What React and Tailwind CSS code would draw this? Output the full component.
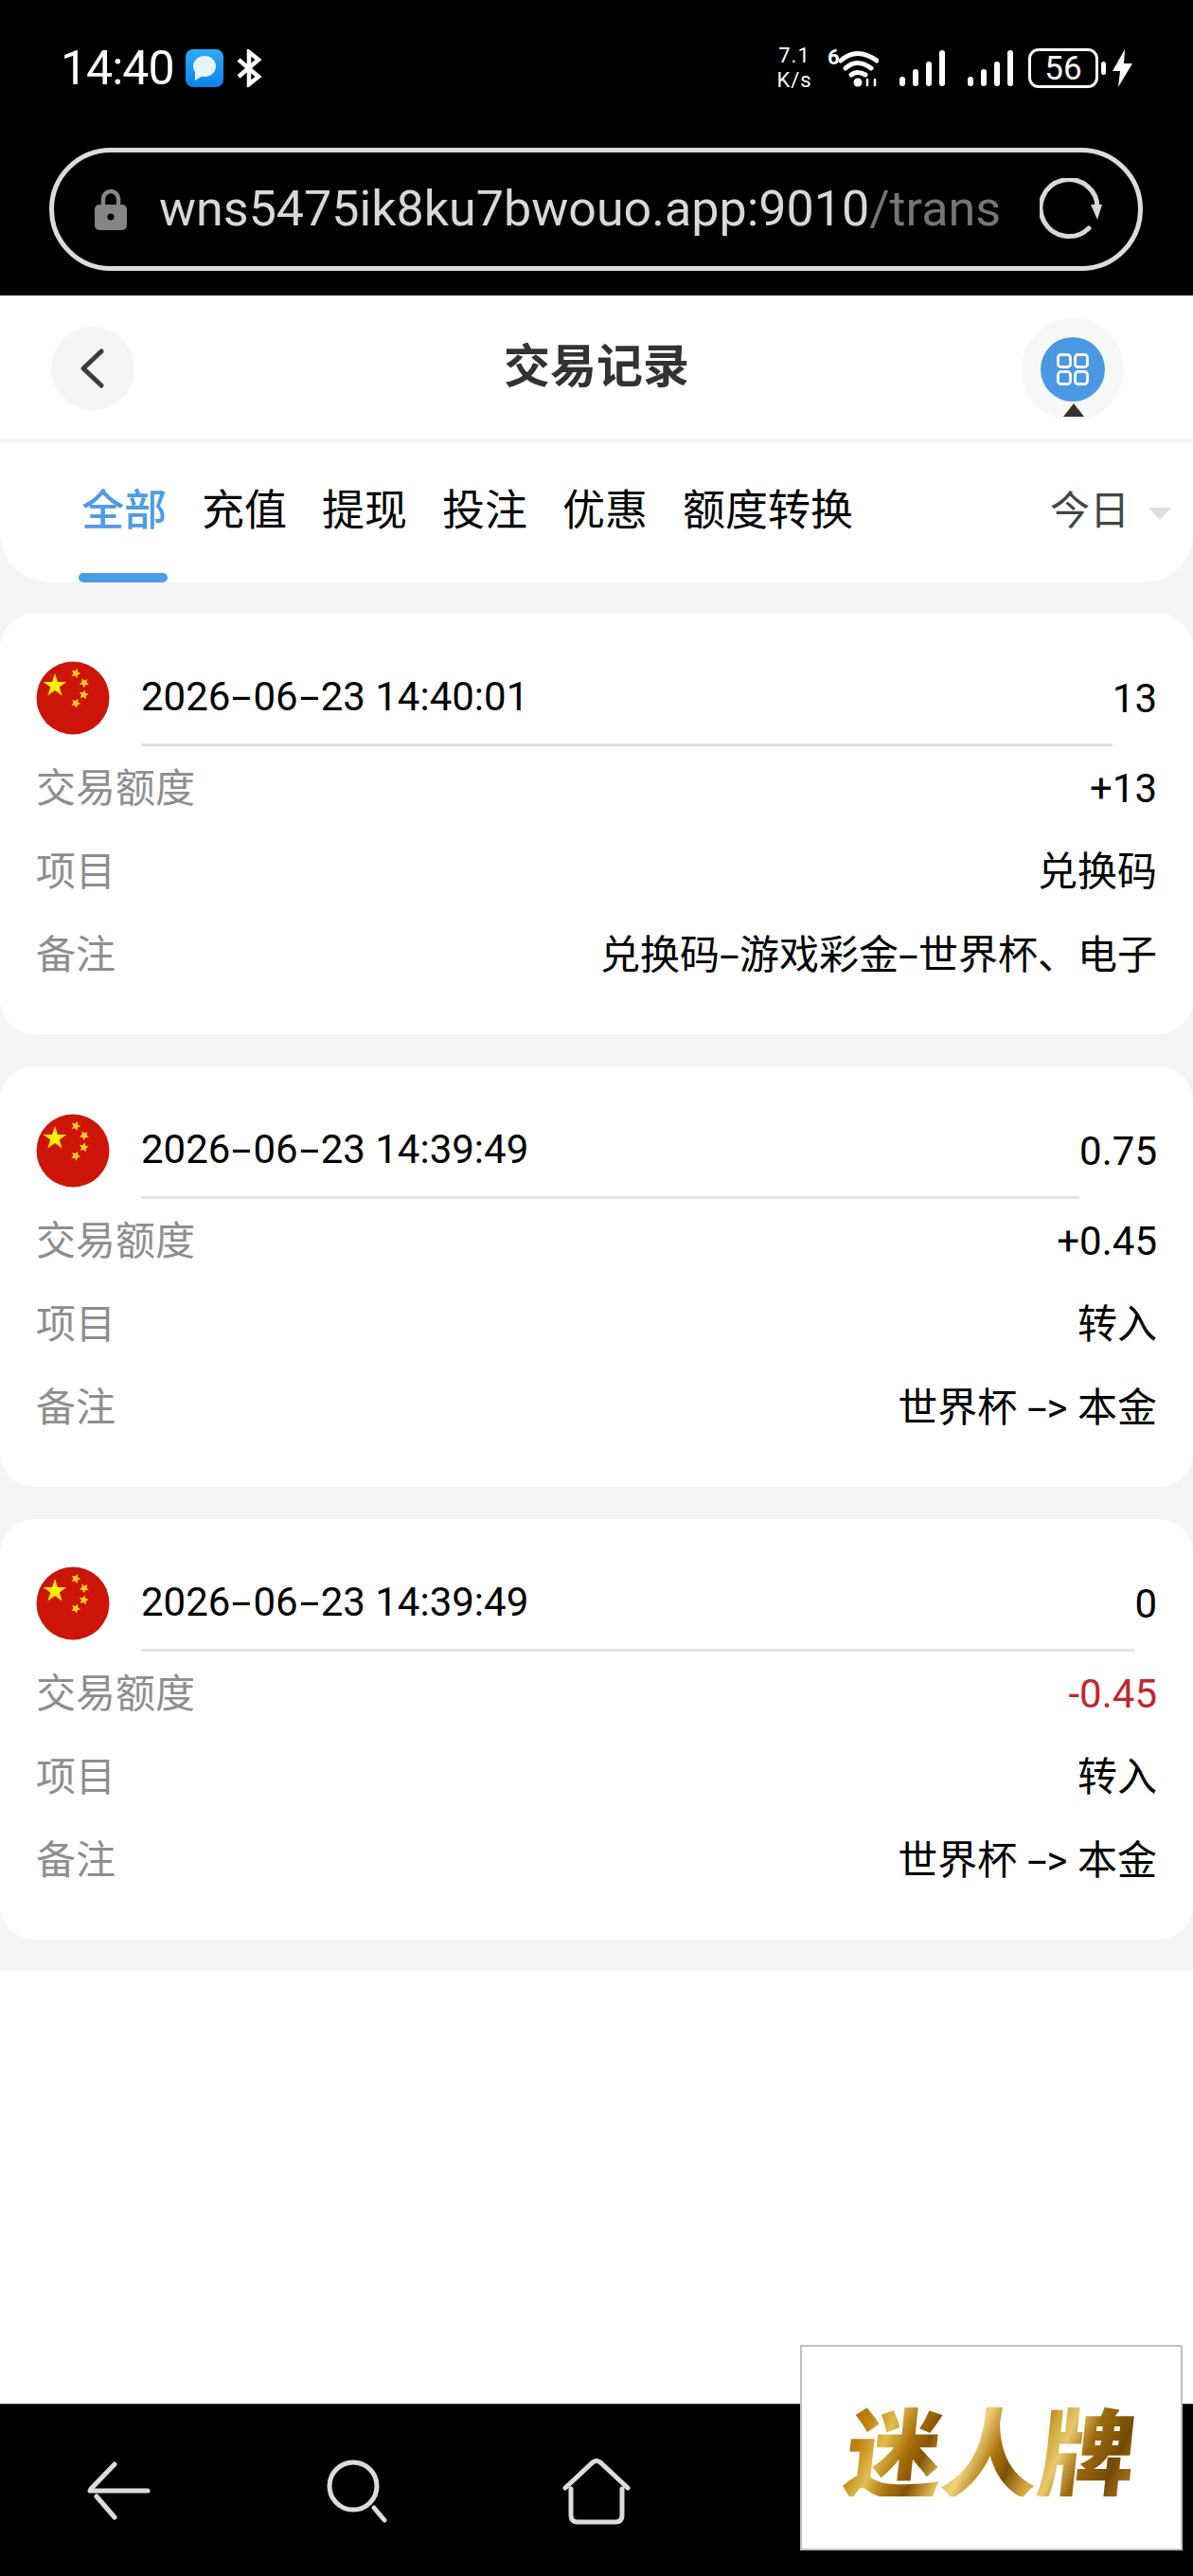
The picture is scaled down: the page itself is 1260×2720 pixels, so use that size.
const records = [
  { time: '2026-06-23 14:40:01', balance: '13', amount: '+13', item: '兑换码', note: '兑换码-游戏彩金-世界杯、电子' },
  { time: '2026-06-23 14:39:49', balance: '0.75', amount: '+0.45', item: '转入', note: '世界杯 -> 本金' },
  { time: '2026-06-23 14:39:49', balance: '0', amount: '-0.45', item: '转入', note: '世界杯 -> 本金', negative: true },
]

const tabs = ['全部', '充值', '提现', '投注', '优惠', '额度转换']

// the phone font has a much wider hyphen than Roboto
function Dashed({ text, dash = 'w-[21px]' }) {
  return text.split('-').map((part, i) => (
    <span key={i}>
      {i > 0 && <span className={`inline-block scale-x-[1.8] text-center ${dash}`}>-</span>}
      {part}
    </span>
  ))
}

function Star({ cx, cy, r, rot = 0, fill }) {
  const pts = []
  const inner = r < 8 ? 0.48 : 0.382
  for (let i = 0; i < 10; i++) {
    const rr = i % 2 === 0 ? r : r * inner
    const a = ((-90 + rot + i * 36) * Math.PI) / 180
    pts.push(`${cx + rr * Math.cos(a)},${cy + rr * Math.sin(a)}`)
  }
  return <polygon points={pts.join(' ')} fill={fill} />
}

function Flag() {
  return (
    <svg width="78" height="78" viewBox="0 0 78 78" className="shrink-0">
      <circle cx="39" cy="39" r="38.5" fill="#cc1508" />
      <Star cx={20} cy={26} r={13} fill="#fff000" />
      <Star cx={42} cy={13} r={5.2} rot={20} fill="#ffd21e" />
      <Star cx={51} cy={23} r={5.2} rot={40} fill="#ffd21e" />
      <Star cx={50.5} cy={35.5} r={5.2} rot={10} fill="#ffd21e" />
      <Star cx={42} cy={44.5} r={5.2} rot={25} fill="#ffd21e" />
    </svg>
  )
}

function Row({ label, children, className = 'text-black' }) {
  return (
    <div className="flex h-[88px] items-center justify-between">
      <span className="text-[42px] text-[#8e8e8e]">{label}</span>
      <span className={`text-[42px] ${className}`}>{children}</span>
    </div>
  )
}

function RecordCard({ record }) {
  return (
    <div className="h-[444px] rounded-[36px] bg-white px-[38px] pt-[38px]">
      <div className="flex h-[102px] items-center">
        <Flag />
        <div className="ml-[33px] flex h-[102px] flex-1 items-center border-b-[3px] border-[#e2e2e2] text-[42px] text-black">
          <Dashed text={record.time} dash="w-[24px]" />
        </div>
        <span className="text-[42px] text-black">{record.balance}</span>
      </div>
      <Row label="交易额度" className={record.negative ? 'text-[#c4252b]' : 'text-black'}>
        {record.negative ? <span className="pl-[3px]">{record.amount}</span> : record.amount}
      </Row>
      <Row label="项目">{record.item}</Row>
      <Row label="备注"><Dashed text={record.note} /></Row>
    </div>
  )
}

function SignalBars() {
  return (
    <div className="flex h-[38px] w-[48px] items-end justify-between">
      {[10, 18, 26, 38].map((h, i) => <span key={i} className="w-[6px] rounded-full bg-white" style={{ height: h }} />)}
    </div>
  )
}

function StatusBar() {
  return (
    <div className="mb-[12px] flex h-[144px] items-center justify-between pl-[64px] pr-[64px] text-white">
      <div className="flex items-center">
        <span className="w-[120px] text-[50px] leading-none tracking-[-1px]">14:40</span>
        <svg width="40" height="40" viewBox="0 0 40 40" className="ml-[12px]">
          <defs>
            <linearGradient id="msg" x1="0" y1="0" x2="0" y2="1">
              <stop offset="0" stopColor="#2eaaf8" />
              <stop offset="1" stopColor="#0f80ef" />
            </linearGradient>
          </defs>
          <rect width="40" height="40" rx="8" fill="url(#msg)" />
          <ellipse cx="20" cy="18" rx="12" ry="11" fill="#e6f4fd" />
          <path d="M10 24 L10 33 L18 28 Z" fill="#e6f4fd" />
        </svg>
        <svg width="28" height="40" viewBox="0 0 28 40" className="ml-[13px]" fill="none" stroke="#fff" strokeWidth="4.5">
          <path d="M3 11 L24 29 L14 37 L14 3 L24 11 L3 29" />
        </svg>
      </div>
      <div className="flex items-center">
        <div className="flex w-[40px] flex-col items-center text-[22px] leading-[26px] tracking-[1px]">
          <div>7.1</div>
          <div>K/s</div>
        </div>
        <div className="relative ml-[15px] h-[40px] w-[54px]">
          <span className="absolute left-0 top-[-3px] text-[22px] font-bold leading-[24px]">6</span>
          <svg width="54" height="40" viewBox="0 0 54 40" fill="none" stroke="#fff" strokeWidth="5" strokeLinecap="round">
            <path d="M14 12 Q31 -3 52 12" />
            <path d="M19 20 Q31 9 46 20" />
            <path d="M25 27 Q31 22 40 27" />
            <circle cx="32" cy="35" r="4.5" fill="#fff" stroke="none" />
            <path d="M42 38 L42 32 M50 38 L50 32" strokeWidth="2.5" />
          </svg>
        </div>
        <div className="ml-[22px]"><SignalBars /></div>
        <div className="ml-[24px]"><SignalBars /></div>
        <div className="ml-[16px] flex h-[42px] w-[74px] items-center justify-center rounded-[11px] border-[3px] border-white text-[35px] leading-none">56</div>
        <span className="ml-[3px] h-[14px] w-[5px] rounded-full bg-white" />
        <svg width="21" height="40" viewBox="0 0 21 40" className="ml-[7px]">
          <path d="M13 0 L0 23 L8 23 L6 40 L21 15 L12 15 Z" fill="#fff" />
        </svg>
      </div>
    </div>
  )
}

function AddressBar() {
  return (
    <div className="ml-[52px] mr-[53px] flex h-[130px] items-center rounded-full border-[5px] border-[#dcdcdc] pl-[43px]">
      <svg width="34" height="44" viewBox="0 0 34 44" className="shrink-0">
        <path d="M9 20 V11 a8 8 0 0 1 16 0 V20" fill="none" stroke="#858585" strokeWidth="4.5" />
        <rect x="0" y="17" width="34" height="27" rx="5" fill="#858585" />
        <circle cx="17" cy="30" r="3.5" fill="#000" />
      </svg>
      <div className="ml-[34px] w-[885px] shrink-0 whitespace-nowrap text-[52px] text-[#d8d8d8]">
        wns5475ik8ku7bwouo.app:9010<span className="text-[#757575]">/trans</span>
      </div>
      <svg width="66" height="66" viewBox="0 0 66 66" className="ml-[45px] shrink-0" fill="none" stroke="#d8d8d8" strokeWidth="5" strokeLinecap="round">
        <path d="M52 53 A30 30 0 1 1 61 33" />
        <path d="M54 28 L61 44 L66 28 Z" fill="#d8d8d8" stroke="none" />
      </svg>
    </div>
  )
}

function BottomNav() {
  return (
    <div className="relative flex h-[182px] items-center border-t border-[#333] bg-black">
      <svg className="absolute left-[92px] top-[60px]" width="70" height="62" viewBox="0 0 70 62" fill="none" stroke="#dcdcdc" strokeWidth="5" strokeLinecap="round">
        <path d="M3 31 H64 M29 3 L4 29 M29 59 L10 37" />
      </svg>
      <svg className="absolute left-[345px] top-[58px]" width="66" height="68" viewBox="0 0 66 68" fill="none" stroke="#dcdcdc" strokeWidth="5" strokeLinecap="round">
        <ellipse cx="28" cy="28" rx="25" ry="25" />
        <path d="M50 51 L61 64" />
      </svg>
      <svg className="absolute left-[594px] top-[57px]" width="72" height="70" viewBox="0 0 72 70" fill="none" stroke="#dcdcdc" strokeWidth="5" strokeLinecap="round">
        <path d="M3 31 L32 4 Q36 1 40 4 L69 31" />
        <path d="M9 32 V60 Q9 67 16 67 H56 Q63 67 63 60 V32" />
      </svg>
    </div>
  )
}

export default function App() {
  return (
    <div className="relative h-[2720px] w-[1260px] overflow-hidden bg-white" style={{ fontFamily: '"Roboto", "Noto Sans CJK SC", sans-serif' }}>
      <div className="h-[312px] bg-black">
        <StatusBar />
        <AddressBar />
      </div>

      {/* header */}
      <div className="relative flex h-[155px] items-center justify-center border-b-[4px] border-[#f4f4f4] bg-white">
        <button className="absolute left-[54px] top-[33px] flex h-[88px] w-[88px] items-center justify-center rounded-full bg-[#f4f4f4]">
          <svg width="28" height="42" viewBox="0 0 28 42" fill="none" stroke="#3c3c3c" strokeWidth="5" strokeLinecap="round" strokeLinejoin="round">
            <path d="M23 3 L4 21 L23 39" />
          </svg>
        </button>
        <h1 className="text-[49px] font-bold text-[#333]">交易记录</h1>
        <div className="absolute left-[1079px] top-[24px] flex h-[108px] w-[108px] items-center justify-center rounded-full bg-[#f7f7f7]">
          <div className="flex h-[68px] w-[68px] items-center justify-center rounded-full bg-[#4a98e4]">
            <svg width="34" height="34" viewBox="0 0 34 34" fill="none" stroke="#fff" strokeWidth="2.8">
              <rect x="1.5" y="1.5" width="13" height="13" rx="3" />
              <rect x="19.5" y="1.5" width="13" height="13" rx="3" />
              <rect x="1.5" y="19.5" width="13" height="13" rx="3" />
              <rect x="19.5" y="19.5" width="13" height="13" rx="3" />
            </svg>
          </div>
          <span className="absolute bottom-[4px] left-[44px] h-0 w-0 border-x-[11px] border-b-[14px] border-x-transparent border-b-[#333]" />
        </div>
      </div>

      <div className="bg-[#f4f4f4] pb-[33px]">
        {/* tabs */}
        <div className="flex h-[148px] items-start justify-between rounded-b-[52px] bg-white pl-[86px] pr-[23px] pt-[42px]">
          <div className="flex gap-[37px]">
            {tabs.map((t, i) => (
              <div key={t} className="relative">
                <span className={`text-[45px] leading-[62px] ${i === 0 ? 'font-medium text-[#4e9be6]' : 'text-black'}`}>{t}</span>
                {i === 0 && <span className="absolute left-[-3px] top-[96px] h-[10px] w-[94px] rounded-full bg-[#4e9be6]" />}
              </div>
            ))}
          </div>
          <div className="flex items-center">
            <span className="text-[42px] leading-[62px] text-[#444]">今日</span>
            <span className="ml-[20px] mt-[4px] h-0 w-0 border-x-[12px] border-t-[13px] border-x-transparent border-t-[#dcdee2]" />
          </div>
        </div>

        <div className="mt-[33px] flex flex-col gap-[34px]">
          {records.map((r, i) => <RecordCard key={i} record={r} />)}
        </div>
      </div>

      <div className="absolute bottom-0 left-0 right-0">
        <BottomNav />
      </div>

      {/* floating logo */}
      <div className="absolute left-[845px] top-[2476px] flex h-[217px] w-[404px] items-center justify-center border-2 border-[#c0c0c0] bg-white">
        <span
          className="skew-x-[-6deg] bg-[linear-gradient(110deg,#a06806_0%,#bd8210_8%,#e2bd50_16%,#ab700a_24%,#855306_30%,#dfba55_38%,#eed27c_44%,#ab720c_52%,#805208_58%,#d2a53c_66%,#e6c96c_72%,#9c6a0c_80%,#754a06_90%,#b58220_100%)] bg-clip-text text-[102px] font-black leading-none text-transparent"
          style={{ fontFamily: '"Noto Sans CJK SC", sans-serif' }}
        >
          迷人牌
        </span>
      </div>
    </div>
  )
}
